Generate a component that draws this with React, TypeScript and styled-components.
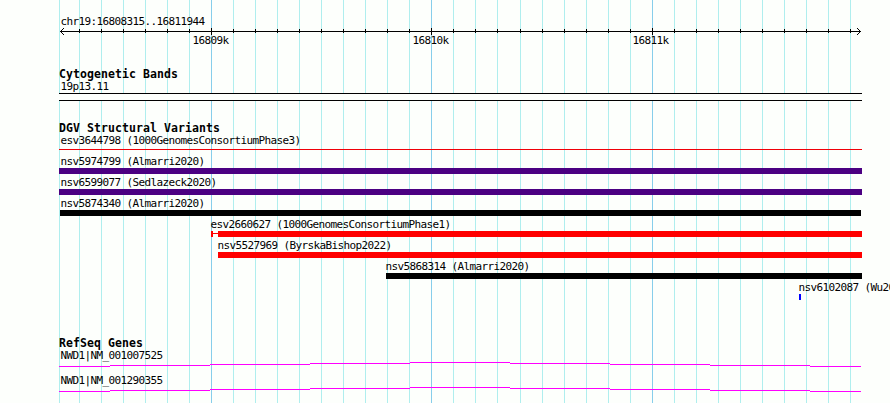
import styled, { createGlobalStyle } from "styled-components";

const GlobalStyle = createGlobalStyle`
  body {
    margin: 0;
    background-color: #fdfffc;
    overflow: hidden;
  }
`;
const Browser = styled.div`
  position: relative;
  width: 890px;
  height: 403px;
  overflow: hidden;
  box-sizing: border-box;
  padding-top: 15px;
  background-color: #fdfffc;
  color: #000000;
  font-family: "DejaVu Sans Mono", "Liberation Mono", monospace;
`;
const Grid = styled.svg`
  position: absolute;
  top: 0;
  left: 0;
`;
const Content = styled.div`
  position: relative;
  display: flex;
  flex-direction: column;
`;
const Label = styled.div<{ $left?: number }>`
  height: 13px;
  line-height: 13px;
  margin-left: ${(p) => p.$left ?? 60}px;
  text-indent: 0.4px;
  font-size: 11px;
  letter-spacing: -0.622px;
  white-space: pre;
`;
const Title = styled.div`
  height: 12px;
  line-height: 13px;
  margin-left: 59px;
  font-size: 11.5px;
  font-weight: bold;
  letter-spacing: 0.077px;
  white-space: pre;
`;
const RulerLine = styled.svg`
  display: block;
  height: 7px;
  margin-bottom: -1px;
`;
const RulerLabels = styled.div`
  display: flex;
  gap: 184px;
  padding-left: 192px;
  margin-bottom: 21px;
`;
const RulerLabel = styled(Label)`
  width: 36px;
  margin-left: 0;
`;
const Band = styled.div`
  box-sizing: border-box;
  width: 803px;
  height: 8px;
  margin-left: 59px;
  border-top: 1px solid #000000;
  border-bottom: 1px solid #000000;
  background-color: #fdfffc;
`;
const Track = styled.section<{ $height: number }>`
  height: ${(p) => p.$height}px;
`;
const Variant = styled.div`
  height: 21px;
`;
const Glyph = styled.div<{ $left: number }>`
  display: flex;
  align-items: center;
  height: 6px;
  margin-left: ${(p) => p.$left}px;
`;
const Bar = styled.div<{ $width: number; $color: string; $height?: number }>`
  flex: none;
  width: ${(p) => p.$width}px;
  height: ${(p) => p.$height ?? 6}px;
  background-color: ${(p) => p.$color};
`;
const ThinBar = styled(Bar)`
  align-self: flex-start;
  margin-top: 2px;
`;
const Gene = styled.div`
  height: 25px;
`;
const GeneLine = styled.svg`
  display: block;
`;

const majors = [211, 431, 652];
const ticks = Array.from({ length: 36 }, (_, i) => {
  const x = 79 + i * 22;
  return x > 497 ? x + 1 : x;
});

const variants = [
  { name: "nsv5974799 (Almarri2020)", text: 60, left: 59, width: 803, color: "#4b0082" },
  { name: "nsv6599077 (Sedlazeck2020)", text: 60, left: 59, width: 803, color: "#4b0082" },
  { name: "nsv5874340 (Almarri2020)", text: 60, left: 60, width: 801, color: "#000000" },
  { name: "esv2660627 (1000GenomesConsortiumPhase1)", text: 210, left: 211, width: 644, color: "#ff0000", start: true },
  { name: "nsv5527969 (ByrskaBishop2022)", text: 217, left: 218, width: 644, color: "#ff0000" },
  { name: "nsv5868314 (Almarri2020)", text: 385, left: 386, width: 476, color: "#000000" },
  { name: "nsv6102087 (Wu2021)", text: 798, left: 799, width: 2, color: "#0000ff" },
];

const genes = ["NWD1|NM_001007525", "NWD1|NM_001290355"];
const steps = [59, 110, 210, 310, 410, 510, 610, 710, 810, 861];
const levels = [4, 3, 2, 1, 0, 1, 2, 3, 4];

function GridLines() {
  return (
    <Grid width="890" height="403" shapeRendering="crispEdges">
      {[59, ...ticks].map((x) => (
        <rect
          key={x}
          x={x}
          y="0"
          width="1"
          height="403"
          fill={majors.includes(x) ? "#87ceeb" : "#afeeee"}
        />
      ))}
    </Grid>
  );
}

function Ruler() {
  return (
    <>
      <Label>chr19:16808315..16811944</Label>
      <RulerLine width="890" height="7" shapeRendering="crispEdges">
        <rect x="60" y="3" width="801" height="1" />
        {ticks.map((x) =>
          majors.includes(x) ? (
            <rect key={x} x={x} y="0" width="1" height="7" />
          ) : (
            <rect key={x} x={x} y="1" width="1" height="4" />
          )
        )}
        {[1, 2, 3].map((n) => (
          <g key={n}>
            <rect x={60 + n} y={3 - n} width="1" height="1" />
            <rect x={60 + n} y={3 + n} width="1" height="1" />
            <rect x={860 - n} y={3 - n} width="1" height="1" />
            <rect x={860 - n} y={3 + n} width="1" height="1" />
          </g>
        ))}
      </RulerLine>
      <RulerLabels>
        <RulerLabel>16809k</RulerLabel>
        <RulerLabel>16810k</RulerLabel>
        <RulerLabel>16811k</RulerLabel>
      </RulerLabels>
    </>
  );
}

function App() {
  return (
    <Browser>
      <GlobalStyle />
      <GridLines />
      <Content>
        <Ruler />
        <Track $height={54}>
          <Title>Cytogenetic Bands</Title>
          <Label>19p13.11</Label>
          <Band />
        </Track>
        <Track $height={215}>
          <Title>DGV Structural Variants</Title>
          <Variant>
            <Label>esv3644798 (1000GenomesConsortiumPhase3)</Label>
            <Glyph $left={59}>
              <ThinBar $width={803} $height={1} $color="#f00008" />
            </Glyph>
          </Variant>
          {variants.map((v) => (
            <Variant key={v.name}>
              <Label $left={v.text}>{v.name}</Label>
              <Glyph $left={v.left}>
                {v.start && (
                  <>
                    <Bar $width={2} $color={v.color} />
                    <ThinBar $width={5} $height={1} $color={v.color} />
                  </>
                )}
                <Bar $width={v.width} $color={v.color} />
              </Glyph>
            </Variant>
          ))}
        </Track>
        <Track $height={66}>
          <Title>RefSeq Genes</Title>
          {genes.map((name) => (
            <Gene key={name}>
              <Label>{name}</Label>
              <GeneLine width="890" height="5" shapeRendering="crispEdges">
                {levels.map((y, i) => (
                  <rect
                    key={steps[i]}
                    x={steps[i]}
                    y={y}
                    width={steps[i + 1] - steps[i]}
                    height="1"
                    fill="#ff00ff"
                  />
                ))}
              </GeneLine>
            </Gene>
          ))}
        </Track>
      </Content>
    </Browser>
  );
}

export default App;
